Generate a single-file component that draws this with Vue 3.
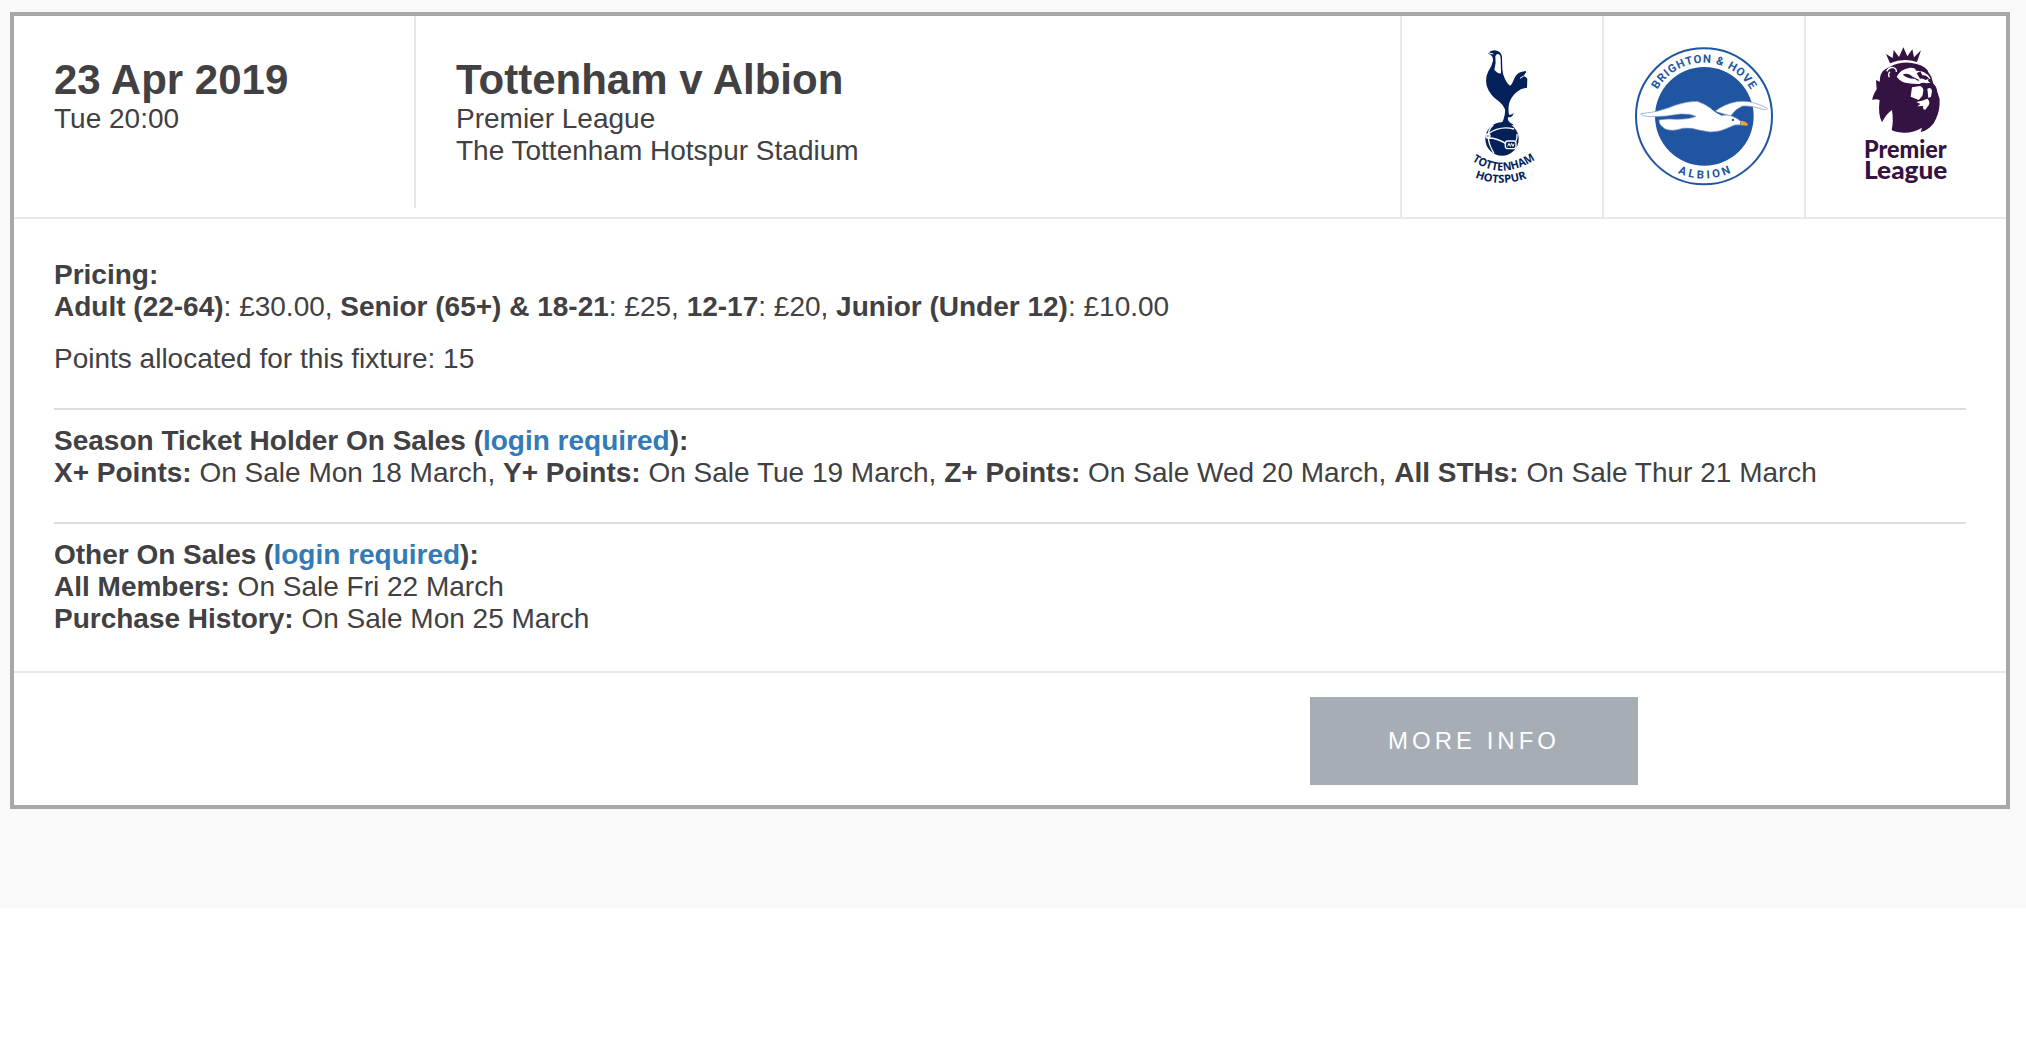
<template>
  <main class="page">
    <article class="fixture">
      <header class="fixture-head">
        <div class="when">
          <h2>23 Apr 2019</h2>
          <p>Tue 20:00</p>
        </div>
        <div class="match">
          <h2>Tottenham v Albion</h2>
          <p>Premier League</p>
          <p>The Tottenham Hotspur Stadium</p>
        </div>
        <div class="badge">
          <svg class="crest spurs" viewBox="-114 -42 600 600">
            <path d="M145 71 Q151 61 165 61 Q183 63 186 80 L187 118 Q188 132 194 145 Q202 163 210 167 Q216 164 221 150 Q228 130 243 126 L257 123 L259 127 Q252 134 251 139 Q259 140 262 146 L261 173 Q242 175 230 186 Q212 202 207 222 Q204 238 207 254 Q216 256 221 248 Q219 262 204 262 Q202 270 208 276 L222 286 L168 286 Q186 281 190 270 Q197 248 195 238 Q190 224 178 215 Q150 196 141 170 Q134 145 145 124 Q156 108 159 92 Q160 80 152 74 Z" />
            <path class="paper" d="M166 78 Q171 70 177 73 Q182 77 182 86 L183 130 Q174 132 163 120 Q169 98 166 78 Z" />
            <path class="line thin" d="M147 69 L160 72 M251 138 L240 145" />
            <circle cx="186" cy="327" r="50" />
            <path class="line" d="M144 312 Q180 286 222 297 M145 324 Q172 324 198 341 M160 284 Q145 298 144 318 Q146 345 162 370 M228 333 Q232 325 231 312" />
            <circle class="line" cx="144" cy="318" r="6" />
            <rect class="line" x="196" y="333" width="32" height="23" rx="7" />
            <path class="line thin" d="M203 349 L207 340 L211 349 L215 340 L219 349 L222 341" />
            <path id="spurs-top" class="guide" d="M96 392 Q188 454 286 388" />
            <path id="spurs-bottom" class="guide" d="M105 443 Q185 474 266 443" />
            <text font-size="34"><textPath href="#spurs-top" textLength="203" lengthAdjust="spacingAndGlyphs">TOTTENHAM</textPath></text>
            <text font-size="33"><textPath href="#spurs-bottom" textLength="159" lengthAdjust="spacingAndGlyphs">HOTSPUR</textPath></text>
          </svg>
        </div>
        <div class="badge">
          <svg class="crest albion" viewBox="-48 -60 600 600">
            <circle class="ring" cx="252" cy="241" r="204" />
            <circle cx="253" cy="241" r="148" />
            <path id="albion-top" class="guide" d="M110 165 A161 161 0 0 1 394 165" />
            <path id="albion-bottom" class="guide" d="M170 409 A187 187 0 0 0 334 409" />
            <text font-size="34"><textPath href="#albion-top" startOffset="5" textLength="338">BRIGHTON &amp; HOVE</textPath></text>
            <text font-size="34"><textPath href="#albion-bottom" startOffset="4" textLength="164">ALBION</textPath></text>
            <path class="bird" d="M285 226 Q312 204 350 197 Q385 193 412 204 Q436 212 442 218 Q440 223 424 219 Q392 208 368 210 Q348 217 332 240 Z" />
            <path class="bird" d="M62 233 Q120 228 165 208 Q200 196 232 196 Q256 204 274 218 Q292 232 306 238 Q326 234 342 243 Q354 248 362 256 L360 267 Q344 264 330 273 Q302 288 270 288 Q240 284 215 277 Q190 274 172 281 Q142 287 128 273 Q116 264 117 252 Q145 247 170 250 Q210 250 228 241 Q210 232 180 234 Q135 243 90 242 Q64 240 62 233 Z" />
            <path class="feather" d="M274 218 Q290 231 306 238" />
            <path class="beak" d="M360 254 Q376 254 384 264 L382 269 L358 267 Q368 263 360 254 Z" />
            <circle cx="339" cy="252" r="3.5" />
          </svg>
        </div>
        <div class="badge">
          <svg class="crest league" viewBox="-102 -60 600 600">
            <path d="M150 82 L138 54 L158 66 L161 42 L177 63 L190 34 L202 61 L217 40 L222 64 L243 43 L231 78 Q190 64 150 82 Z" />
            <path d="M150 92 Q190 72 230 84 Q260 92 266 110 L274 122 L280 143 Q290 150 292 168 L299 190 Q300 225 288 248 L281 262 Q264 284 242 288 L246 275 Q220 291 190 290 Q165 289 155 282 Q161 255 156 222 Q140 232 126 259 Q113 235 119 192 Q108 188 97 192 Q98 178 110 160 L108 132 L119 137 Q119 108 138 98 Z" />
            <path class="line" d="M140 106 Q148 92 160 95 Q170 98 169 108 M148 124 Q143 113 150 107" />
            <path class="paper" d="M170 122 Q180 100 210 95 Q227 94 228 104 Q240 104 251 108 Q264 114 272 128 L265 130 Q262 138 272 140 L260 142 Q248 138 238 144 Q216 144 196 140 Q180 136 170 122 Z" />
            <path d="M188 116 Q204 108 218 122 L238 132 Q236 138 224 128 Q206 130 188 116 Z M241 106 L247 118 Q258 116 268 128 L256 132 Q250 126 240 128 L230 112 Z" />
            <path class="paper" d="M216 154 L240 150 Q250 154 250 164 L247 180 L236 192 L212 182 Z M262 158 Q274 152 276 164 L273 182 L265 186 Z M229 198 L246 194 L262 188 Q272 196 266 208 L256 221 L250 220 L249 210 L232 211 L241 204 Z" />
            <text x="72" y="367" font-size="71" textLength="248" lengthAdjust="spacingAndGlyphs">Premier</text>
            <text x="72" y="430" font-size="71" textLength="250" lengthAdjust="spacingAndGlyphs">League</text>
          </svg>
        </div>
      </header>

      <div class="fixture-body">
        <section class="pricing">
          <p><b>Pricing:</b></p>
          <p><template v-for="(p, i) in prices" :key="p.who"><b>{{ p.who }}</b>: {{ p.cost }}<template v-if="i < prices.length - 1">, </template></template></p>
          <p class="points">Points allocated for this fixture: 15</p>
        </section>
        <section class="holders">
          <p><b>Season Ticket Holder On Sales (<a href="#">login required</a>):</b></p>
          <p><template v-for="(s, i) in holderSales" :key="s.who"><b>{{ s.who }}:</b> {{ s.date }}<template v-if="i < holderSales.length - 1">, </template></template></p>
        </section>
        <section class="others">
          <p><b>Other On Sales (<a href="#">login required</a>):</b></p>
          <p v-for="s in otherSales" :key="s.who"><b>{{ s.who }}:</b> {{ s.date }}</p>
        </section>
      </div>

      <footer class="fixture-foot">
        <button type="button">MORE INFO</button>
      </footer>
    </article>
  </main>
</template>

<script setup>
const prices = [
  { who: 'Adult (22-64)', cost: '£30.00' },
  { who: 'Senior (65+) & 18-21', cost: '£25' },
  { who: '12-17', cost: '£20' },
  { who: 'Junior (Under 12)', cost: '£10.00' },
]

const holderSales = [
  { who: 'X+ Points', date: 'On Sale Mon 18 March' },
  { who: 'Y+ Points', date: 'On Sale Tue 19 March' },
  { who: 'Z+ Points', date: 'On Sale Wed 20 March' },
  { who: 'All STHs', date: 'On Sale Thur 21 March' },
]

const otherSales = [
  { who: 'All Members', date: 'On Sale Fri 22 March' },
  { who: 'Purchase History', date: 'On Sale Mon 25 March' },
]
</script>

<style>
body { margin: 0; background: #fff; }
</style>

<style scoped>
.page {
  box-sizing: border-box; height: 908px;
  padding: 12px 16px 0 10px; background: #f9f9f9;
  font-family: Helvetica, "Liberation Sans", Arial, sans-serif;
  font-size: 28px; line-height: 32px; color: #414042;
}
.fixture {
  box-sizing: border-box; height: 797px;
  display: flex; flex-direction: column;
  background: #fff; border: 4px solid #a8a8a8;
}
h2, p { margin: 0; }
h2 { font-size: 42px; line-height: 46px; font-weight: bold; }

.fixture-head { display: flex; height: 201px; border-bottom: 2px solid #e8e8e8; }
.when {
  box-sizing: border-box; width: 402px; height: 192px;
  padding: 41px 0 0 40px; border-right: 2px solid #e6e6e6;
}
.match { flex: 1; padding: 41px 0 0 40px; }
.badge { width: 200px; border-left: 2px solid #e8e8e8; }

.crest { display: block; width: 200px; height: 200px; }
.crest text { font-weight: bold; }
.crest .guide { fill: none; stroke: none; }
.crest .paper { fill: #fff; }
.crest .line { fill: none; stroke: #fff; stroke-width: 4; }
.crest .line.thin { stroke-width: 3; }
.spurs { fill: #04205a; }
.spurs text { font-family: "Open Sans", sans-serif; }
.albion { fill: #2056a1; }
.albion text { font-family: Roboto, sans-serif; }
.albion .ring { fill: #fff; stroke: #2056a1; stroke-width: 6; }
.albion .bird { fill: #fff; stroke: #7d92c6; stroke-width: 2; }
.albion .feather { fill: none; stroke: #2056a1; stroke-width: 3; }
.albion .beak { fill: #eaa83a; }
.league { fill: #341241; }
.league text { font-family: Lato, sans-serif; font-weight: 900; }

.fixture-body { flex: 1; padding: 0 40px; }
.pricing { height: 149px; padding-top: 40px; }
.points { margin-top: 20px; }
.pricing { border-bottom: 2px solid #ddd; }
.holders { height: 97px; padding-top: 15px; border-bottom: 2px solid #ddd; }
.others { padding-top: 15px; }
a { color: #337ab7; text-decoration: none; }

.fixture-foot { height: 132px; border-top: 2px solid #e8e8e8; }
button {
  display: block; width: 328px; height: 88px; margin: 24px 0 0 1296px; padding: 0;
  border: 0; background: #a6adb4; color: #fff;
  font: 24px "Liberation Sans", Arial, sans-serif; letter-spacing: 4px;
}
</style>
